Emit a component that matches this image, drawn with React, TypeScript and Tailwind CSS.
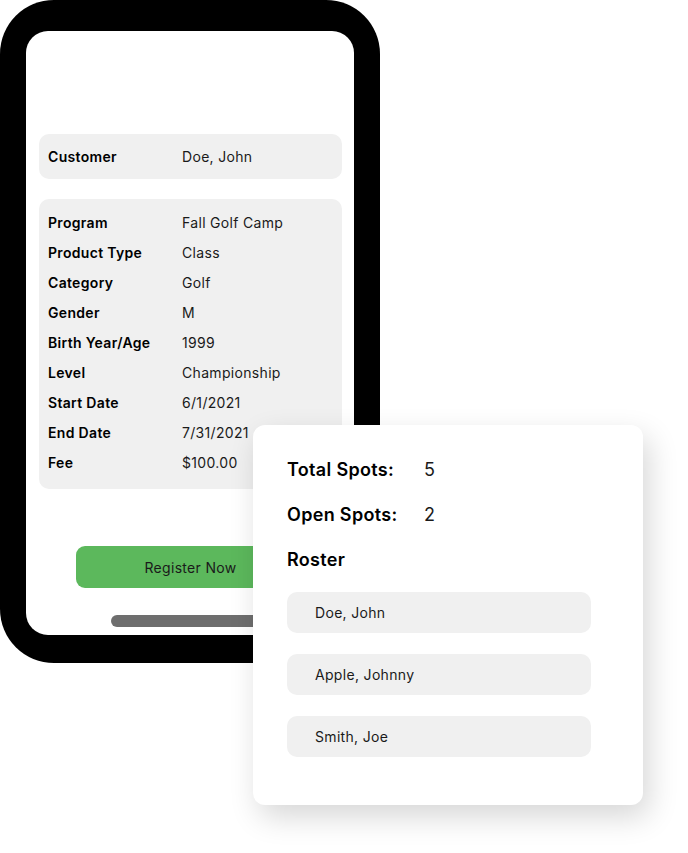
import React from 'react';

const details: [string, string][] = [
  ['Program', 'Fall Golf Camp'],
  ['Product Type', 'Class'],
  ['Category', 'Golf'],
  ['Gender', 'M'],
  ['Birth Year/Age', '1999'],
  ['Level', 'Championship'],
  ['Start Date', '6/1/2021'],
  ['End Date', '7/31/2021'],
  ['Fee', '$100.00'],
];

const roster = ['Doe, John', 'Apple, Johnny', 'Smith, Joe'];

const Row: React.FC<{ label: string; value: string; className?: string }> = ({ label, value, className = '' }) => (
  <div className={`flex items-center text-[14px] ${className}`}>
    <span className="w-[134px] shrink-0 font-semibold text-black">{label}</span>
    <span className="text-[#1a1a1a]">{value}</span>
  </div>
);

export default function App() {
  return (
    <div className="relative w-[688px] h-[853px] bg-white tracking-[0.02em] font-['Inter','Noto_Sans',sans-serif]">
      {/* phone */}
      <div className="w-[380px] h-[663px] bg-black rounded-[54px] pt-[31px] px-[26px] pb-[28px]">
        <div className="h-full bg-white rounded-[22px] pl-[13px] pr-[12px] pt-[103px] flex flex-col">
          <div className="h-[45px] bg-[#f0f0f0] rounded-[10px] px-[9px] flex items-center">
            <Row label="Customer" value="Doe, John" className="w-full" />
          </div>
          <div className="mt-[20px] bg-[#f0f0f0] rounded-[10px] px-[9px] pt-[8px] pb-[12px] flex flex-col">
            {details.map(([label, value]) => (
              <Row key={label} label={label} value={value} className="h-[30px]" />
            ))}
          </div>
          <button className="mt-[57px] self-center w-[230px] h-[42px] rounded-[9px] bg-[#5cb85c] text-[14px] text-[#1a1a1a]">
            Register Now
          </button>
          <div className="mt-[27px] self-center w-[160px] h-[12px] rounded-full bg-[#6e6e6e]" />
        </div>
      </div>

      {/* spots + roster card, floating over the phone */}
      <div className="absolute left-[253px] top-[425px] w-[390px] h-[380px] bg-white rounded-[12px] shadow-[6px_12px_30px_rgba(0,0,0,0.16)] pl-[34px] pt-[31px]">
        <div className="flex items-center h-[27px] text-[18px]">
          <span className="w-[137px] font-semibold text-black">Total Spots:</span>
          <span className="text-[#1a1a1a]">5</span>
        </div>
        <div className="flex items-center h-[27px] mt-[18px] text-[18px]">
          <span className="w-[137px] font-semibold text-black">Open Spots:</span>
          <span className="text-[#1a1a1a]">2</span>
        </div>
        <div className="h-[27px] mt-[18px] flex items-center text-[18px] font-semibold text-black">Roster</div>
        <div className="mt-[19px] flex flex-col gap-[21px]">
          {roster.map(name => (
            <div key={name} className="w-[304px] h-[41px] rounded-[10px] bg-[#f0f0f0] pl-[28px] flex items-center text-[14px] text-[#1a1a1a]">
              {name}
            </div>
          ))}
        </div>
      </div>
    </div>
  );
}
